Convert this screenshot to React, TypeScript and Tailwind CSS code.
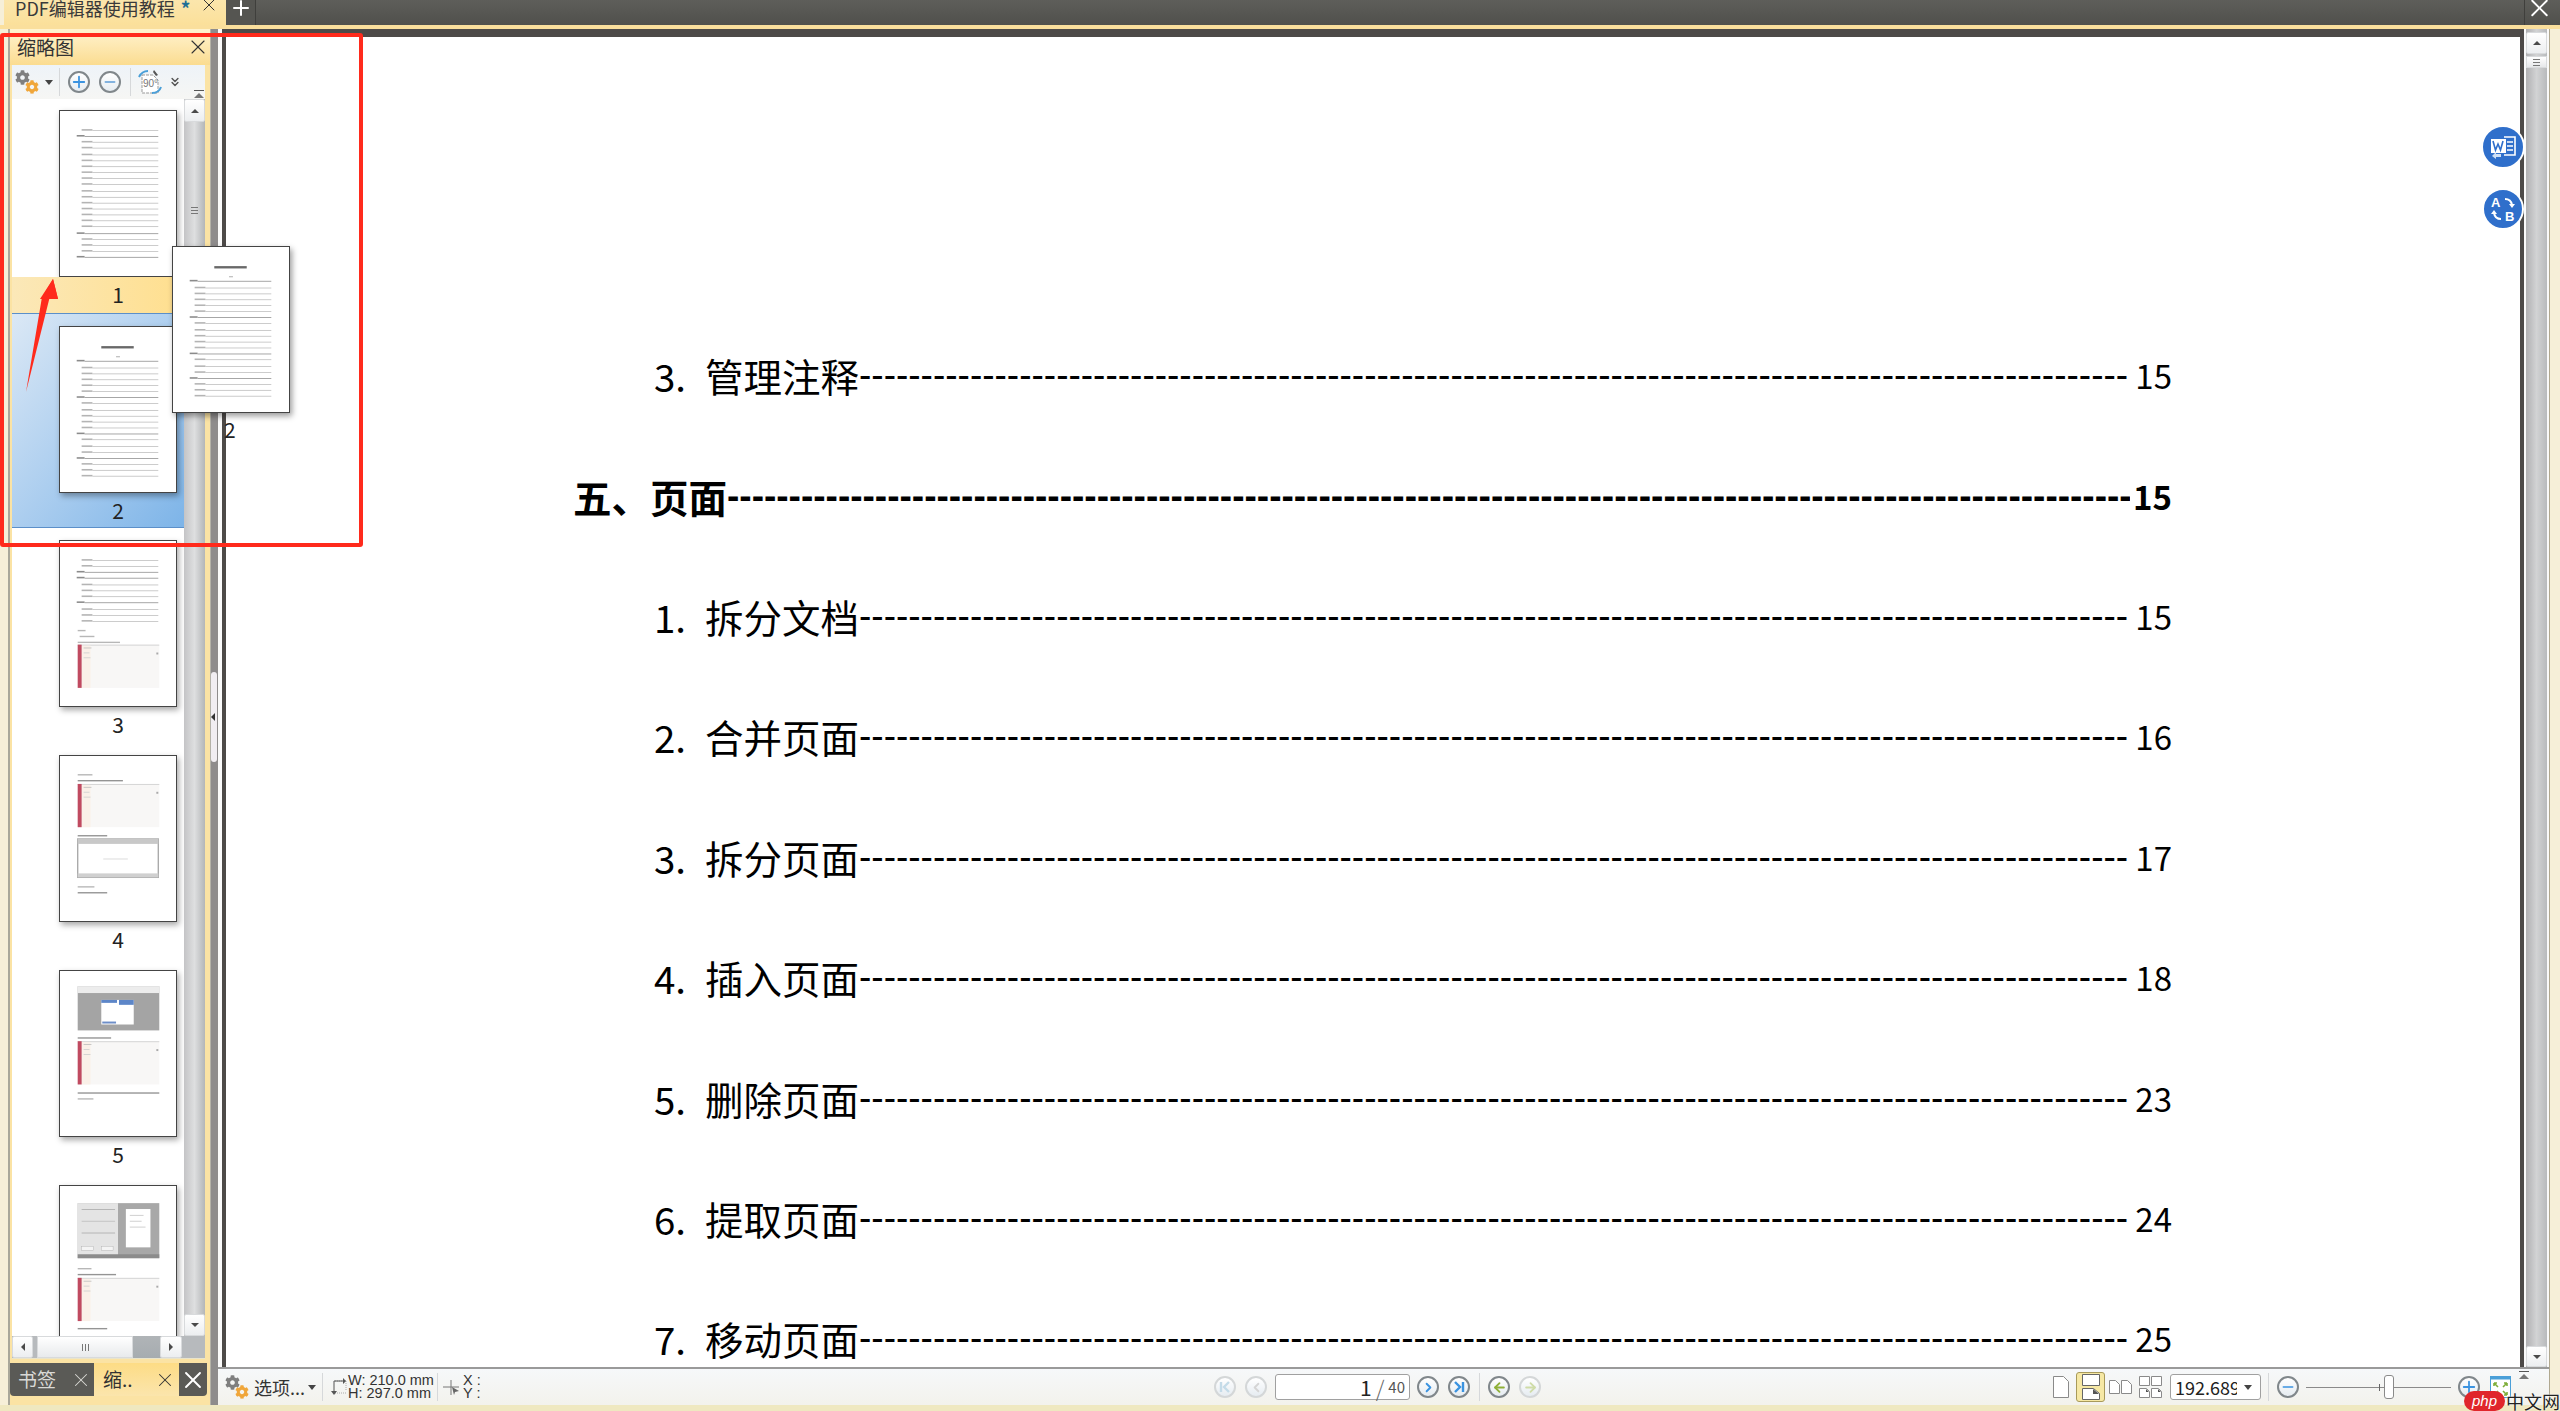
import type { ReactNode } from 'react'
import { X, Plus, Minus, ChevronLeft, ChevronRight, ChevronsDown, ArrowLeft, ArrowRight } from 'lucide-react'
import { FaCog } from 'react-icons/fa'

const tocRows = [
  { num: '3.', title: '管理注释', page: '15' },
  { title: '五、页面', page: '15', bold: true },
  { num: '1.', title: '拆分文档', page: '15' },
  { num: '2.', title: '合并页面', page: '16' },
  { num: '3.', title: '拆分页面', page: '17' },
  { num: '4.', title: '插入页面', page: '18' },
  { num: '5.', title: '删除页面', page: '23' },
  { num: '6.', title: '提取页面', page: '24' },
  { num: '7.', title: '移动页面', page: '25' },
]

// 缩略图里的目录行
function TocLines({ rows, strong = [] }: { rows: number[]; strong?: number[] }) {
  return (
    <>
      {rows.map((y) => {
        const isStrong = strong.includes(y)
        return (
          <g key={y}>
            <rect x={isStrong ? 17 : 22} y={y - 1} width={isStrong ? 8 : 11} height={1.6} fill="#777" opacity={isStrong ? 0.85 : 0.55} />
            <rect x={isStrong ? 25 : 33} y={y} width={isStrong ? 75 : 67} height={isStrong ? 0.8 : 0.6} fill={isStrong ? '#8f8f8f' : '#a8a8a8'} />
          </g>
        )
      })}
    </>
  )
}

function RedShot({ y, h }: { y: number; h: number }) {
  return (
    <g>
      <rect x={18} y={y} width={83} height={h} fill="#f8f7f6" />
      <rect x={18} y={y} width={83} height={1} fill="#d4d4d4" />
      <rect x={22} y={y + 1} width={9} height={h - 1} fill="#faf0e8" />
      <rect x={18} y={y} width={4} height={h} fill="#c04a60" />
      <rect x={24} y={y + 3} width={8} height={0.8} fill="#bbb" />
      <rect x={24} y={y + 8} width={6} height={0.8} fill="#ccc" />
      <rect x={24} y={y + 13} width={7} height={0.8} fill="#ccc" />
      <rect x={98} y={y + 8} width={2} height={2} fill="#aaa" />
    </g>
  )
}

function GreyShot({ y, h }: { y: number; h: number }) {
  return (
    <g>
      <rect x={18} y={y} width={83} height={h} fill="#a8a8a8" />
      <rect x={18} y={y} width={41} height={h} fill="#e4e4e4" />
      <rect x={22} y={y + 6} width={34} height={0.8} fill="#aaa" />
      <rect x={22} y={y + 18} width={34} height={0.8} fill="#bbb" />
      <rect x={22} y={y + 30} width={34} height={0.8} fill="#aaa" />
      <rect x={22} y={y + 44} width={12} height={4} fill="#f4f4f4" stroke="#aaa" strokeWidth={0.4} />
      <rect x={42} y={y + 44} width={12} height={4} fill="#f4f4f4" stroke="#aaa" strokeWidth={0.4} />
      <rect x={67} y={y + 6} width={25} height={39} fill="#fff" />
      <rect x={71} y={y + 12} width={14} height={0.7} fill="#bbb" />
      <rect x={71} y={y + 18} width={12} height={0.7} fill="#bbb" />
      <rect x={71} y={y + 24} width={16} height={0.7} fill="#bbb" />
      <rect x={18} y={y + h - 4} width={83} height={4} fill="#8c8c8c" />
    </g>
  )
}

function TextBlob({ x, y, w, dark = false }: { x: number; y: number; w: number; dark?: boolean }) {
  return <rect x={x} y={y} width={w} height={1.4} fill={dark ? '#666' : '#999'} opacity={0.7} />
}

function PageArt({ page }: { page: number }) {
  return (
    <svg viewBox="0 0 118 165" className="block w-full h-full">
      {page === 1 && (
        <TocLines
          rows={[18, 24, 30, 36, 43, 49, 55, 61, 67, 73, 80, 86, 92, 98, 104, 110, 116, 123, 129, 135, 141, 147]}
          strong={[24, 123, 147]}
        />
      )}
      {page === 2 && (
        <>
          <rect x={42} y={18} width={33} height={2.4} fill="#444" opacity={0.8} />
          <rect x={57} y={28.5} width={4} height={0.8} fill="#999" />
          <TocLines
            rows={[33, 40, 46, 52, 58, 64, 70, 76, 83, 89, 95, 101, 107, 113, 120, 126, 132, 138, 144, 150]}
            strong={[33, 70, 107, 132]}
          />
        </>
      )}
      {page === 3 && (
        <>
          <TocLines rows={[18, 24, 30, 36, 43, 49, 55, 61, 68, 74, 80]} strong={[30, 36, 61]} />
          <TextBlob x={18} y={89} w={8} />
          <TextBlob x={20} y={95} w={15} />
          <TextBlob x={18} y={101} w={43} />
          <RedShot y={104} h={44} />
        </>
      )}
      {page === 4 && (
        <>
          <TextBlob x={18} y={17} w={15} />
          <TextBlob x={18} y={23} w={46} dark />
          <RedShot y={27} h={44} />
          <TextBlob x={18} y={79} w={30} dark />
          <rect x={18} y={83} width={82} height={39} fill="#fff" stroke="#aaa" strokeWidth={1.4} />
          <rect x={18} y={83} width={82} height={5} fill="#c8c8c8" />
          <rect x={18} y={118} width={82} height={4} fill="#d0d0d0" />
          <rect x={44} y={103} width={25} height={0.7} fill="#ccc" />
          <TextBlob x={18} y={131} w={17} />
          <TextBlob x={18} y={137} w={30} dark />
        </>
      )}
      {page === 5 && (
        <>
          <rect x={18} y={14} width={83} height={45} fill="#a4a4a4" />
          <rect x={18} y={14} width={83} height={7} fill="#ececec" />
          <rect x={42} y={28} width={33} height={25} fill="#fff" />
          <rect x={42} y={28} width={16} height={3} fill="#5d86c8" />
          <rect x={60} y={28} width={15} height={5} fill="#5d86c8" />
          <rect x={43} y={50} width={14} height={2} fill="#6d8ec8" />
          <TextBlob x={18} y={66} w={34} dark />
          <RedShot y={70} h={44} />
          <TextBlob x={18} y={122} w={83} dark />
          <TextBlob x={18} y={128} w={16} />
        </>
      )}
      {page === 6 && (
        <>
          <GreyShot y={16} h={56} />
          <TextBlob x={18} y={82} w={14} />
          <TextBlob x={18} y={88} w={39} dark />
          <RedShot y={92} h={44} />
          <TextBlob x={18} y={143} w={30} dark />
        </>
      )}
    </svg>
  )
}

function Thumb({ page }: { page: number }) {
  return (
    <div className="w-[118px] h-[167px] bg-white border border-[#444] shadow-[2px_3px_6px_rgba(0,0,0,0.35)]">
      <PageArt page={page} />
    </div>
  )
}

function ThumbLabel({ children }: { children: ReactNode }) {
  return <div className="flex w-[118px] h-[36px] items-center justify-center text-[21px] text-[#222]">{children}</div>
}

function GearIcon() {
  return (
    <span className="relative block w-[24px] h-[24px] shrink-0">
      <FaCog className="absolute left-0 top-0 w-[15px] h-[15px] text-[#7f7f7f]" />
      <FaCog className="absolute right-0 bottom-0 w-[14px] h-[14px] text-[#f0a63a]" />
    </span>
  )
}

function Caret({ className = '' }: { className?: string }) {
  return (
    <svg width="8" height="5" viewBox="0 0 8 5" className={`shrink-0 ${className}`}>
      <polygon points="0,0 8,0 4,5" fill="#444" />
    </svg>
  )
}

function CollapseMark({ className = '' }: { className?: string }) {
  return (
    <svg width="12" height="9" viewBox="0 0 12 9" className={className}>
      <path d="M1 .5h10" stroke="#555" />
      <polygon points="1,8 6,3 11,8" fill="#777" />
    </svg>
  )
}

function Round({ children, faded = false, className = '' }: { children: ReactNode; faded?: boolean; className?: string }) {
  return (
    <span
      className={`flex items-center justify-center w-[22px] h-[22px] rounded-full border-2 shrink-0 bg-gradient-to-b from-white to-[#e6ecf1] ${
        faded ? 'border-[#d4d7d8]' : 'border-[#80878b]'
      } ${className}`}
    >
      {children}
    </span>
  )
}

function ScrollBtn({ dir, className = '' }: { dir: 'up' | 'down' | 'left' | 'right'; className?: string }) {
  const points = {
    up: '1,7 5,3 9,7',
    down: '1,3 5,7 9,3',
    left: '7,1 3,5 7,9',
    right: '3,1 7,5 3,9',
  }[dir]
  return (
    <div className={`flex items-center justify-center shrink-0 bg-gradient-to-b from-white to-[#eceef0] border border-[#d8dadc] rounded-[2px] ${className}`}>
      <svg width="10" height="10" viewBox="0 0 10 10">
        <polygon points={points} fill="#4a4a4a" />
      </svg>
    </div>
  )
}

function Grip({ vertical = false }: { vertical?: boolean }) {
  return (
    <div className={`flex gap-[2px] ${vertical ? 'flex-row' : 'flex-col'}`}>
      <span className={`bg-[#777] ${vertical ? 'w-px h-[7px]' : 'w-[7px] h-px'}`} />
      <span className={`bg-[#777] ${vertical ? 'w-px h-[7px]' : 'w-[7px] h-px'}`} />
      <span className={`bg-[#777] ${vertical ? 'w-px h-[7px]' : 'w-[7px] h-px'}`} />
    </div>
  )
}

function Separator({ className = '' }: { className?: string }) {
  return <span className={`block w-px h-[28px] bg-[#d6d8da] shrink-0 ${className}`} />
}

function TabBar() {
  return (
    <div className="flex h-[25px] pl-[4px] shrink-0 bg-[#f6efd8]">
      <div className="flex w-[222px] items-start bg-gradient-to-b from-[#fbe6ac] to-[#fbe09a] overflow-hidden">
        <span className="ml-[11px] -mt-[5px] text-[18px] leading-[26px] text-[#3a3a3a] whitespace-nowrap">PDF编辑器使用教程</span>
        <span className="ml-[6px] -mt-[5px] text-[19px] leading-[26px] text-[#1f6f96] font-bold">*</span>
        <X className="ml-[9px] -mt-[5px] w-[20px] h-[20px] text-[#333]" strokeWidth={1.2} />
      </div>
      <div className="flex flex-1 bg-gradient-to-b from-[#5e5e5a] to-[#50504c]">
        <div className="flex justify-center w-[30px] h-full border-r border-[#3f3f3c] bg-[#555551]">
          <Plus className="w-[24px] h-[24px] text-white -mt-[4px]" strokeWidth={2} />
        </div>
        <div className="flex-1" />
        <div className="flex justify-center w-[30px] border-l border-[#3f3f3c] mr-[6px]">
          <X className="w-[30px] h-[30px] text-white -mt-[7px]" strokeWidth={1.6} />
        </div>
      </div>
    </div>
  )
}

function RotateIcon() {
  return (
    <svg width="26" height="26" viewBox="0 0 26 26" className="shrink-0">
      <path d="M5 6h11l5 5v13H5z" fill="#fff" stroke="#999" strokeDasharray="3 1" />
      <text x="6" y="18" fontSize="10" fill="#777" fontFamily="Liberation Sans">90°</text>
      <path d="M2 8 Q5 2 11 2" fill="none" stroke="#4a9fd8" strokeWidth="2" />
      <path d="M24 18 Q22 24 15 24" fill="none" stroke="#4a9fd8" strokeWidth="2" />
      <path d="M17 1l4 5-2 1-3-4z" fill="#555" />
    </svg>
  )
}

function ThumbList() {
  return (
    <div className="flex-1 min-w-0 min-h-0 overflow-hidden bg-white">
      {/* 第 1 页: 只有页码区是黄色 */}
      <div className="h-[214px]">
        <div className="h-[178px] pt-[11px] pl-[47px]">
          <Thumb page={1} />
        </div>
        <div className="pl-[47px] bg-gradient-to-r from-[#fbe8b8] to-[#ffdf8e]">
          <ThumbLabel>1</ThumbLabel>
        </div>
      </div>
      {/* 第 2 页: 选中 */}
      <div className="h-[215px] pt-[12px] pl-[47px] border-y border-[#5b8fc9] bg-gradient-to-br from-[#dbe8f5] to-[#7db4e8]">
        <Thumb page={2} />
        <ThumbLabel>2</ThumbLabel>
      </div>
      {[3, 4, 5, 6].map((page) => (
        <div key={page} className="h-[215px] pt-[12px] pl-[47px]">
          <Thumb page={page} />
          <ThumbLabel>{page}</ThumbLabel>
        </div>
      ))}
    </div>
  )
}

function SidePanel() {
  return (
    <div className="flex flex-col w-[202px] ml-[8px] shrink-0 border-l-2 border-[#a9a79a] bg-[#fbe3a4]">
      {/* 标题 */}
      <div className="flex items-center justify-between h-[36px] pl-[7px] shrink-0 bg-gradient-to-b from-[#fff3cf] to-[#fbdc90]">
        <span className="text-[19px] text-[#333]">缩略图</span>
        <X className="w-[24px] h-[24px] text-[#333]" strokeWidth={1.1} />
      </div>
      {/* 工具栏 */}
      <div className="relative flex items-center h-[34px] ml-[2px] mr-[5px] pl-[3px] shrink-0 bg-gradient-to-b from-[#eef3f8] to-[#f6f6f4]">
        <GearIcon />
        <Caret className="ml-[6px]" />
        <Separator className="ml-[6px]" />
        <Round className="ml-[8px]">
          <Plus className="w-[18px] h-[18px] text-[#3b93e0]" strokeWidth={2.4} />
        </Round>
        <Round className="ml-[9px]">
          <Minus className="w-[16px] h-[16px] text-[#5d9cd6]" strokeWidth={2.4} />
        </Round>
        <Separator className="ml-[9px]" />
        <span className="ml-[6px]">
          <RotateIcon />
        </span>
        <ChevronsDown className="w-[14px] h-[14px] ml-[5px] text-[#555]" strokeWidth={2.5} />
        <CollapseMark className="absolute right-[0px] bottom-[0px]" />
      </div>
      {/* 列表 + 竖向滚动条 */}
      <div className="flex flex-1 min-h-0 ml-[2px] mr-[5px]">
        <ThumbList />
        <div className="flex flex-col w-[21px] shrink-0 bg-gradient-to-r from-[#c4c4c6] via-[#dedfe0] to-[#b4b6b8]">
          <ScrollBtn dir="up" className="h-[23px]" />
          <div className="flex flex-1 flex-col items-center pt-[85px]">
            <Grip />
          </div>
          <ScrollBtn dir="down" className="h-[22px]" />
        </div>
      </div>
      {/* 横向滚动条 */}
      <div className="flex h-[23px] ml-[2px] mr-[5px] shrink-0 border-b border-[#e9e4cc] bg-[#b7babd]">
        <ScrollBtn dir="left" className="w-[21px]" />
        <div className="flex items-center justify-center w-[96px] ml-[4px] bg-gradient-to-b from-white to-[#e8eaec] border border-[#d8dadc]">
          <Grip vertical />
        </div>
        <div className="w-[27px] bg-gradient-to-b from-[#b0b4b7] to-[#a6acb0]" />
        <ScrollBtn dir="right" className="w-[22px]" />
      </div>
      {/* 底部标签 */}
      <div className="flex h-[33px] mt-[4px] mr-[3px] shrink-0 rounded-b-[4px] bg-[#5a5a56] text-[19px]">
        <div className="flex w-[84px] items-center pl-[8px] pr-[2px] justify-between text-[#d9d9d6]">
          <span>书签</span>
          <X className="w-[22px] h-[22px]" strokeWidth={1.1} />
        </div>
        <div className="flex w-[85px] items-center pl-[9px] pr-[3px] justify-between bg-gradient-to-b from-[#fddc85] to-[#fbe5ac] text-[#333]">
          <span>缩..</span>
          <X className="w-[22px] h-[22px]" strokeWidth={1.1} />
        </div>
        <div className="flex flex-1 items-center justify-center text-white">
          <X className="w-[28px] h-[28px]" strokeWidth={1.6} />
        </div>
      </div>
      <div className="h-[9px] shrink-0" />
    </div>
  )
}

function Splitter() {
  return (
    <div className="flex items-center w-[8px] shrink-0 bg-[#8e8c8c] border-l border-[#b4b2a8]">
      <div className="relative flex items-center w-[6px] h-[90px] rounded-[3px] bg-[#f1eef2]">
        <svg width="5" height="8" viewBox="0 0 5 8" className="absolute left-[0px] top-[41px]">
          <polygon points="4,0 0,4 4,8" fill="#333" />
        </svg>
      </div>
    </div>
  )
}

function DocRow({ num, title, page, bold }: { num?: string; title: string; page: string; bold?: boolean }) {
  return (
    <div className={`flex items-center h-[120.4px] text-[38.5px] leading-[48px] text-black ${bold ? 'font-bold pl-[347px]' : 'font-normal pl-[428px]'}`}>
      {num && <span className="w-[51px] shrink-0">{num}</span>}
      <span className="shrink-0">{title}</span>
      <span className={`flex-1 min-w-0 overflow-hidden whitespace-nowrap text-[37px] font-['Liberation_Sans',sans-serif] ${bold ? 'font-bold' : ''}`}>
        {'-'.repeat(bold ? 114 : 103)}
      </span>
      <span className={`shrink-0 text-[33px] ${bold ? 'ml-[3px]' : 'ml-[7px]'}`}>{page}</span>
    </div>
  )
}

function DocView() {
  return (
    <div className="flex flex-1 min-h-0 pl-[4px] bg-[#fafafa]">
      <div className="flex flex-col flex-1 min-w-0 border-x-[4px] border-[#4d4a48] border-t-[8px] border-t-[#4d4a48]">
        <div className="flex-1 min-h-0 overflow-hidden bg-white pt-[278px] pr-[348px]">
          {tocRows.map((row) => (
            <DocRow key={row.title} {...row} />
          ))}
        </div>
      </div>
      <div className="flex flex-col w-[21px] mx-[2px] shrink-0 bg-gradient-to-r from-[#b0b0b2] via-[#d2d3d4] to-[#b8babc]">
        <ScrollBtn dir="up" className="h-[22px] mt-[3px]" />
        <div className="flex h-[12px] mt-[2px] items-center justify-center bg-gradient-to-b from-white to-[#e6e8ea] border border-[#d8dadc]">
          <Grip />
        </div>
        <div className="flex-1" />
        <ScrollBtn dir="down" className="h-[21px]" />
      </div>
    </div>
  )
}

function StatusBar() {
  return (
    <div className="relative flex items-center h-[38px] shrink-0 border-t-2 border-[#9a9a9a] bg-gradient-to-b from-[#f6f8fa] to-[#f3f2ec]">
      {/* 左侧 */}
      <div className="flex items-center w-[996px] pl-[7px] shrink-0">
        <GearIcon />
        <span className="ml-[5px] w-[49px] text-[18px] text-[#333] whitespace-nowrap">选项...</span>
        <Caret className="ml-[5px]" />
        <Separator className="ml-[6px]" />
        <svg width="17" height="18" viewBox="0 0 17 18" className="ml-[7px] shrink-0">
          <path d="M5 3h11M16 3v10M5 15h11" fill="none" stroke="#aaa" strokeDasharray="1 1" />
          <path d="M4 2h11M4 2v12" fill="none" stroke="#555" transform="translate(0 1)" />
          <path d="M13 0l3 3-3 3zM1 13l3 4 3-4z" fill="#555" />
        </svg>
        <div className="ml-[1px] w-[89px] text-[14.5px] leading-[13px] text-[#333] font-['Liberation_Sans',sans-serif] whitespace-nowrap">
          <div>W: 210.0 mm</div>
          <div>H: 297.0 mm</div>
        </div>
        <Separator />
        <svg width="17" height="17" viewBox="0 0 17 17" className="ml-[5px] shrink-0">
          <path d="M8 1v15M0 8h16" stroke="#777" strokeWidth="1" />
          <path d="M9 8l7 4-4 1-1 3z" fill="#666" />
        </svg>
        <div className="ml-[3px] text-[14.5px] leading-[13px] text-[#333] font-['Liberation_Sans',sans-serif]">
          <div>X :</div>
          <div>Y :</div>
        </div>
      </div>
      {/* 中间翻页 */}
      <div className="flex items-center shrink-0">
        <Round faded>
          <svg width="14" height="14" viewBox="0 0 14 14">
            <path d="M11 2L6 7l5 5" fill="none" stroke="#c4dbe8" strokeWidth="2.4" />
            <path d="M3 2v10" stroke="#c4dbe8" strokeWidth="2.4" />
          </svg>
        </Round>
        <Round faded className="ml-[9px]">
          <ChevronLeft className="w-[15px] h-[15px] text-[#d5d5d5]" strokeWidth={3} />
        </Round>
        <div className="flex items-center justify-end w-[135px] h-[26px] ml-[8px] pr-[4px] border border-[#a0a0a0] rounded-[3px] bg-white text-[#222]">
          <span className="text-[21px] leading-[24px]">1</span>
          <span className="mx-[4px] text-[22px] leading-[24px] text-[#666] font-light">/</span>
          <span className="text-[15px] leading-[24px] text-[#555]">40</span>
        </div>
        <Round className="ml-[7px]">
          <ChevronRight className="w-[15px] h-[15px] text-[#3b93e0]" strokeWidth={3} />
        </Round>
        <Round className="ml-[9px]">
          <svg width="14" height="14" viewBox="0 0 14 14">
            <path d="M3 2l5 5-5 5" fill="none" stroke="#3b93e0" strokeWidth="2.4" />
            <path d="M11 2v10" stroke="#3b93e0" strokeWidth="2.4" />
          </svg>
        </Round>
        <Separator className="ml-[9px]" />
        <Round className="ml-[8px]">
          <ArrowLeft className="w-[15px] h-[15px] text-[#8fb038]" strokeWidth={3} />
        </Round>
        <Round faded className="ml-[9px]">
          <ArrowRight className="w-[15px] h-[15px] text-[#cfdca8]" strokeWidth={3} />
        </Round>
      </div>
      <div className="flex-1" />
      {/* 右侧视图与缩放 */}
      <div className="flex items-center shrink-0 pr-[38px]">
        <svg width="16" height="22" viewBox="0 0 16 22" className="shrink-0">
          <path d="M.5.5h10l5 5v16H.5z" fill="#fff" stroke="#8a8a8a" />
        </svg>
        <div className="flex items-center justify-center w-[29px] h-[30px] ml-[7px] rounded-[3px] border border-[#a89a5a] bg-[#f6e8a4]">
          <svg width="18" height="26" viewBox="0 0 18 26">
            <path d="M.5.5h17v11H.5zM.5 14.5h11l6 5v6H.5z" fill="#fff" stroke="#666" />
            <path d="M11 15l6 5-6 0z" fill="#555" />
          </svg>
        </div>
        <svg width="23" height="14" viewBox="0 0 23 14" className="ml-[4px] shrink-0">
          <path d="M.5.5h6l4 4v9H.5zM12.5.5h6l4 4v9h-10z" fill="#fff" stroke="#8a8a8a" />
        </svg>
        <svg width="23" height="22" viewBox="0 0 23 22" className="ml-[7px] shrink-0">
          <path d="M.5.5h10v9H.5zM12.5.5h10v9h-10zM.5 12.5h7l3 3v6H.5zM12.5 12.5h7l3 3v6h-10z" fill="#fff" stroke="#8a8a8a" />
          <path d="M7 13l3 3H7zM19 13l3 3h-3z" fill="#555" />
        </svg>
        <div className="flex items-center justify-between w-[91px] h-[26px] ml-[8px] pl-[4px] pr-[8px] border border-[#a0a0a0] rounded-[3px] bg-white overflow-hidden">
          <span className="w-[62px] overflow-hidden whitespace-nowrap text-[18px] leading-[24px] text-[#222]">192.689</span>
          <Caret />
        </div>
        <Separator className="ml-[7px]" />
        <Round className="ml-[8px]">
          <Minus className="w-[16px] h-[16px] text-[#3b93e0]" strokeWidth={2.4} />
        </Round>
        <div className="relative flex items-center w-[145px] h-[24px] ml-[7px]">
          <span className="block w-full h-px bg-[#8a8a8a]" />
          <span className="absolute left-[73px] top-[9px] w-px h-[7px] bg-[#666]" />
          <span className="absolute left-[78px] top-0 w-[10px] h-[24px] rounded-[3px] border border-[#8a8a8a] bg-white" />
        </div>
        <Round className="ml-[7px]">
          <Plus className="w-[18px] h-[18px] text-[#3b93e0]" strokeWidth={2.4} />
        </Round>
        <svg width="21" height="22" viewBox="0 0 21 22" className="ml-[10px] shrink-0">
          <rect x=".5" y=".5" width="20" height="21" fill="#fff" stroke="#4a9fd8" />
          <rect x=".5" y=".5" width="20" height="3" fill="#4a9fd8" />
          <path d="M4 7l4 4M4 7v3M4 7h3M17 7l-4 4M17 7v3M17 7h-3M4 19l4-4M4 19v-3M4 19h3M17 19l-4-4M17 19v-3M17 19h-3" fill="none" stroke="#7fae3a" strokeWidth="1.6" />
        </svg>
      </div>
      <CollapseMark className="absolute right-[19px] top-[2px]" />
    </div>
  )
}

// 拖动中的第 2 页预览 + 红框标注 + 箭头
function Overlays() {
  return (
    <>
      <div className="absolute left-[172px] top-[246px] w-[118px] h-[167px] bg-white border border-[#444] shadow-[2px_3px_6px_rgba(0,0,0,0.4)]">
        <PageArt page={2} />
      </div>
      <span className="absolute left-[224px] top-[415px] text-[21px] leading-[28px] text-[#222]">2</span>
      <div className="absolute left-0 top-[33px] w-[363px] h-[514px] border-[4px] border-[#ff2a1c] rounded-[3px]" />
      <svg width="40" height="120" viewBox="0 0 40 120" className="absolute left-[22px] top-[276px]">
        <polygon points="31,3 36,23 28,20 4,116 20,21 19,23" fill="#ff2a1c" />
        <polygon points="31,3 36,23 18,23" fill="#ff2a1c" />
      </svg>

      <div className="absolute left-[2481px] top-[125px] flex items-center justify-center w-[44px] h-[44px] rounded-full border-2 border-white bg-[#2f6fcb]">
        <svg width="28" height="26" viewBox="0 0 28 26">
          <path d="M15 3h11v18H15" fill="none" stroke="#fff" strokeWidth="1.6" />
          <path d="M18 8h6M18 12h6M18 16h6" stroke="#fff" strokeWidth="1.4" />
          <rect x="2" y="5" width="15" height="14" fill="#fff" />
          <path d="M4 7l2.5 9L9 10l2.5 6L14 7" fill="none" stroke="#2f6fcb" strokeWidth="1.6" />
          <path d="M3 22l4-4v2h5v3H7v2z" fill="#cfe0f5" />
        </svg>
      </div>
      <div className="absolute left-[2482px] top-[188px] flex items-center justify-center w-[42px] h-[42px] rounded-full border-2 border-white bg-[#2f6fcb] text-white">
        <svg width="30" height="30" viewBox="0 0 30 30">
          <path d="M17 5q6 0 7 6M13 25q-6 0-7-6" fill="none" stroke="#fff" strokeWidth="2" />
          <path d="M21 10l3 4 3-4zM3 20l3-4 3 4z" fill="#fff" />
          <text x="3" y="13" fontSize="13" fontWeight="700" fill="#fff" fontFamily="Liberation Sans">A</text>
          <text x="17" y="27" fontSize="13" fontWeight="700" fill="#fff" fontFamily="Liberation Sans">B</text>
        </svg>
      </div>

      <div className="absolute right-0 bottom-0 flex items-center h-[20px] w-[96px]">
        <span className="flex items-center justify-center w-[41px] h-[20px] rounded-full bg-[#e0262b] text-[15px] leading-[20px] italic text-white font-['Liberation_Sans',sans-serif]">php</span>
        <span className="ml-[1px] text-[18px] leading-[20px] text-[#222] whitespace-nowrap [text-shadow:0_0_2px_#fff]">中文网</span>
      </div>
    </>
  )
}

export default function App() {
  return (
    <div className="relative flex flex-col w-[2560px] h-[1411px] overflow-hidden bg-[#f6efd8] font-['Noto_Sans_CJK_SC','Noto_Sans',sans-serif]">
      <TabBar />
      <div className="h-[4px] shrink-0 bg-[#fadf9c]" />
      <div className="flex flex-1 min-h-0 border-b-[6px] border-[#efe8c0]">
        <SidePanel />
        <Splitter />
        <div className="flex flex-col flex-1 min-w-0 mr-[10px] border-r border-[#b0a890]">
          <DocView />
          <StatusBar />
        </div>
      </div>
      <Overlays />
    </div>
  )
}
